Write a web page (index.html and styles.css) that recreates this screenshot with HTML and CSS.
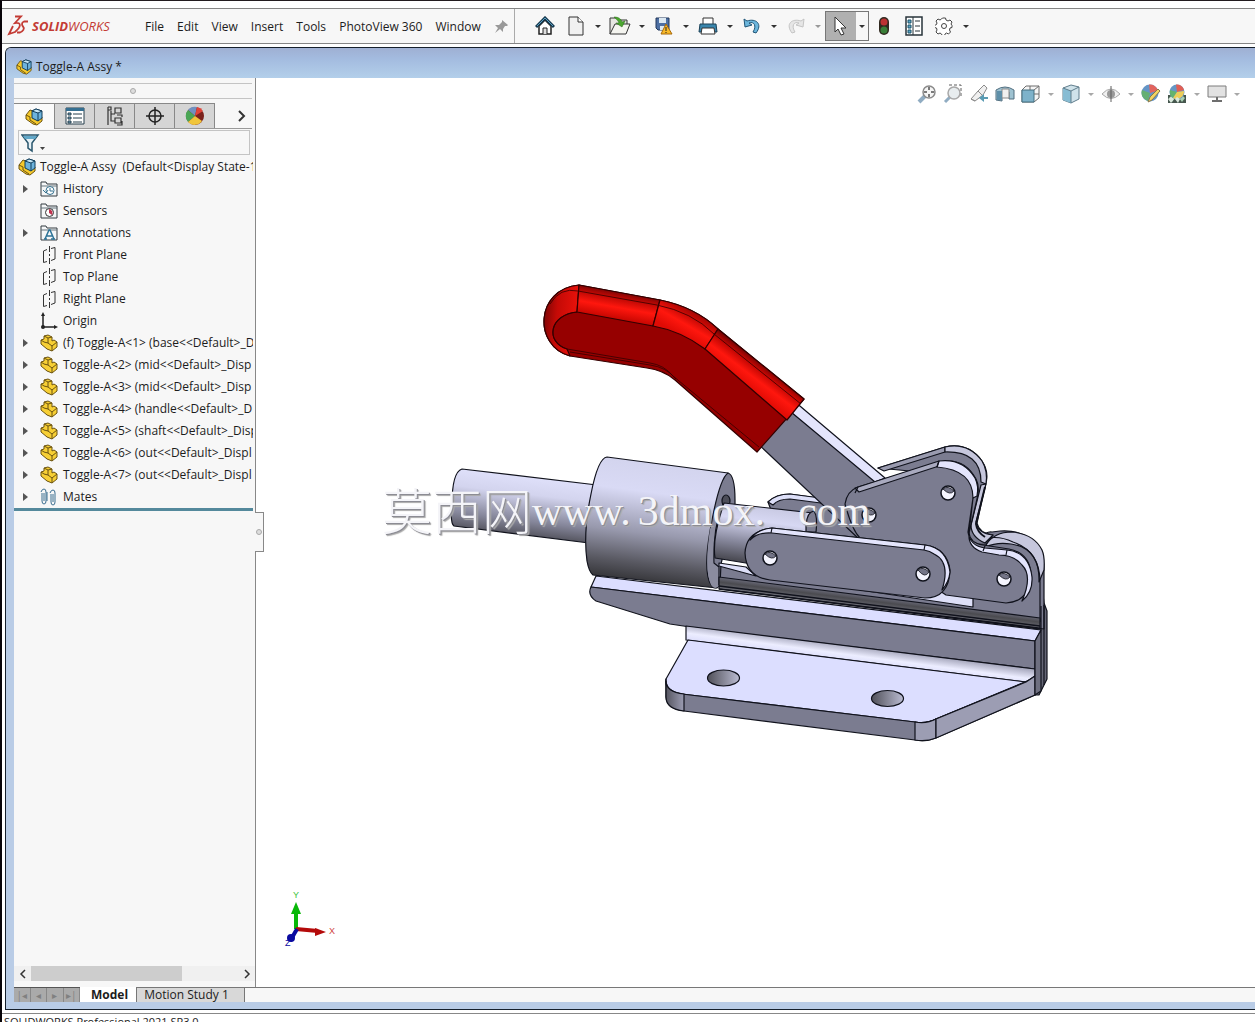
FILE: index.html
```html
<!DOCTYPE html>
<html lang="en">
<head>
<meta charset="utf-8">
<title>Toggle-A Assy - SOLIDWORKS</title>
<link rel="stylesheet" href="styles.css">
</head>
<body>
<svg class="defs" aria-hidden="true">
  <symbol id="asm" viewBox="0 0 18 18">
    <path d="M1 7l4-5 3 1v6l4 3 5-3v4l-5 4-4-1-7-5z" fill="#f6c92b" stroke="#6b5310" stroke-linejoin="round"/>
    <path d="M1 7l4 2v3l6 4" fill="none" stroke="#6b5310"/>
    <path d="M7 3l4-2 6 2v7l-4 3-6-3z" fill="#6db3dc" stroke="#123f5c" stroke-linejoin="round"/>
    <path d="M7 3l6 2 4-2-6-2z" fill="#c7e6f5"/><path d="M7 3l6 2 4-2M13 5v8M7 3l4-2 6 2" fill="none" stroke="#123f5c"/>
  </symbol>
  <symbol id="part" viewBox="0 0 18 18">
    <path d="M1 6l3-1V2l4-1 4 2v4l2-1 3 2v5l-5 4-5-2-6-5z" fill="#f7cf34" stroke="#6b5310" stroke-linejoin="round"/>
    <path d="M4 2l4 2v5l4 3 5-4M1 6l3 2 4 1M12 12v5M8 4l4-1" fill="none" stroke="#6b5310"/>
  </symbol>
  <symbol id="plane" viewBox="0 0 18 18"><path d="M7 3.500L3.500 5v11.500L7 15.500M11 2.500l4-1V13l-4 1.500" fill="none" stroke="#333"/><path d="M9.500 0v18" stroke="#333" stroke-dasharray="6 2 2 2"/></symbol>
  <symbol id="folder" viewBox="0 0 18 18"><path d="M1 16V2h5l1 2h10v12z" fill="#f4f6f7" stroke="#333b40"/><path d="M1 6h16" stroke="#66757d"/></symbol>
</svg>

<div class="app">
  <header class="menubar">
    <div class="brand">
      <svg width="22" height="22" viewBox="0 0 22 22"><path d="M8 1.500h6L8 8c7-1 6 4 0 9l-6 2 4-8M21 6.500h-4c-3 1-2 4-1 5 2 2 0 5-3 6h-3" fill="none" stroke="#c33b34" stroke-width="1.800"/></svg>
      <span><b>SOLID</b>WORKS</span>
    </div>
    <nav class="menus">
      <button>File</button><button>Edit</button><button>View</button><button>Insert</button><button>Tools</button><button>PhotoView 360</button><button>Window</button>
      <button aria-label="Pin menu"><svg width="14" height="14" viewBox="0 0 14 14"><path d="M8 0l6 5-1 1-2 0-2 3v3l-3-3-5 4 3-5-3-3 4 0 3-3z" fill="#999"/></svg></button>
    </nav>
    <div class="tools">
      <button aria-label="Home"><svg width="20" height="20" viewBox="0 0 20 20"><path d="M4 10v8h12v-8l-6-6z" fill="#fff" stroke="#222" stroke-width="1.500"/><path d="M8 18v-6h4v6" fill="#ddd" stroke="#222"/><path d="M1 11l9-9 9 9" fill="none" stroke="#163a50" stroke-width="3"/><path d="M2 10l8-8 8 8" fill="none" stroke="#5b9fc2"/></svg></button>
      <button class="new" aria-label="New"><svg width="20" height="20" viewBox="0 0 20 20"><path d="M3 1h9l5 5v13H3z" fill="#f1f1f1" stroke="#333"/><path d="M12 1v5h5" fill="#fff" stroke="#333"/></svg></button><button class="caret" aria-label="New options"></button>
      <button aria-label="Open"><svg width="22" height="20" viewBox="0 0 22 20"><path d="M1 18V2h6l2 2h9v4" fill="#e6e6e1" stroke="#333"/><path d="M1 18l5-10h15l-4 10z" fill="#f4f4ef" stroke="#333"/><path d="M5 1c5 0 7 2 8 5l3-1-3 6-6-4 3 0c-1-3-3-4-5-6z" fill="#4ba82e" stroke="#256715" stroke-width=".5"/></svg></button><button class="caret" aria-label="Open options"></button>
      <button aria-label="Save"><svg width="18" height="20" viewBox="0 0 18 20"><path d="M1 2h13v12H3l-2-2z" fill="#4d6fa3" stroke="#22395c"/><path d="M4 2h7v5H4zM5 10h6v4H5z" fill="#dce8f2"/><path d="M11 8l6 10H6z" fill="#f8b928" stroke="#a86908"/><path d="M11 11v4M11 16v1" stroke="#222"/></svg></button><button class="caret" aria-label="Save options"></button>
      <button aria-label="Print"><svg width="20" height="20" viewBox="0 0 20 20"><path d="M5 8V2h10v6" fill="#fff" stroke="#333"/><path d="M2 8h16l1 8H1z" fill="#3a86ad" stroke="#1c4258"/><path d="M4 12h12l1 6H3z" fill="#fff" stroke="#333"/></svg></button><button class="caret" aria-label="Print options"></button>
      <button aria-label="Undo"><svg width="18" height="18" viewBox="0 0 18 18"><path d="M1 2l1 8 7-2-3-2c5-2 8 3 4 9l3 1c7-9 0-15-9-12z" fill="#6cb6dc" stroke="#1f5577"/></svg></button><button class="caret" aria-label="Undo options"></button>
      <button aria-label="Redo" disabled><svg width="18" height="18" viewBox="0 0 18 18"><path d="M17 2l-1 8-7-2 3-2c-5-2-8 3-4 9l-3 1c-7-9 0-15 9-12z" fill="#e6e6e6" stroke="#c4c4c4"/></svg></button><button class="caret pale" aria-label="Redo options"></button>
      <span class="select"><button class="pressed" aria-label="Select"><svg width="16" height="20" viewBox="0 0 16 20"><path d="M2 1v15l3-3 3 6 3-1-3-6h5z" fill="#fff" stroke="#333"/></svg></button><button class="caret" aria-label="Select options"></button></span>
      <button aria-label="Rebuild"><svg width="12" height="20" viewBox="0 0 12 20"><rect x="1" y="1" width="10" height="18" rx="5" fill="#30291f"/><circle cx="6" cy="6" r="3.500" fill="#bb3232"/><circle cx="6" cy="14" r="3.500" fill="#397f38"/></svg></button>
      <button aria-label="File properties"><svg width="18" height="20" viewBox="0 0 18 20"><path d="M1 1h16v18H1z" fill="#fff" stroke="#28343b" stroke-width="1.500"/><path d="M3 4h3v3H3zM3 9h3v3H3zM3 14h3v3H3z" fill="#59a6c9" stroke="#1d5269"/><path d="M8 1v18M10 5h5M10 10h5M10 15h5" stroke="#28343b"/></svg></button>
      <button aria-label="Options"><svg width="18" height="18" viewBox="0 0 18 18"><path d="M7.500 1h3l.5 2 2 1 2-1 2 2-1 2 1 1.500v2l-2 .5-.5 2 1 2-2 2-2-1-1.500 1-.5 2h-2l-1-2-1.500-1-2 1-2-2 1-2-.5-2-2-.5v-2l2-1 .5-1.500-1-2 2-2 2 1 1.500-1z" fill="#fff" stroke="#444"/><circle cx="9" cy="9" r="2.500" fill="none" stroke="#444"/></svg></button><button class="caret" aria-label="Options menu"></button>
    </div>
  </header>

  <main class="document">
    <h1 class="titlebar"><svg width="16" height="16"><use href="#asm"/></svg>Toggle-A Assy *</h1>
    <div class="workspace">
      <aside class="panel">
        <div class="grip"><i></i></div>
        <div class="paneltabs">
          <button class="active" aria-label="Feature tree"><svg width="18" height="18"><use href="#asm"/></svg></button>
          <button aria-label="Properties"><svg width="20" height="20" viewBox="0 0 20 20"><path d="M1 2h18v16H1z" fill="#fff" stroke="#263e4c"/><path d="M1 2h18v3H1z" fill="#356f91"/><path d="M3 7h3v2H3zM3 11h3v2H3zM3 15h3v2H3z" fill="#73a9c5" stroke="#263e4c"/><path d="M8 8h9M8 12h9M8 16h9" stroke="#263e4c"/></svg></button>
          <button aria-label="Configurations"><svg width="20" height="20" viewBox="0 0 20 20"><path d="M3 1v18M3 1h3v3H3M6 5v10h4M6 8h4M10 2h6v5h-6zM10 12h6v5h-6zM12 9h5v2M12 19h5v-4" fill="none" stroke="#333" stroke-width="1.200"/></svg></button>
          <button aria-label="Dimensions"><svg width="20" height="20" viewBox="0 0 20 20"><circle cx="10" cy="10" r="6" fill="none" stroke="#222" stroke-width="1.500"/><path d="M10 1v18M1 10h18" stroke="#222" stroke-width="1.500"/></svg></button>
          <button aria-label="Appearances"><svg width="20" height="20" viewBox="0 0 20 20"><circle cx="10" cy="10" r="9" fill="#7b221d"/><path d="M10 10L3 4a9 9 0 0 1 9-3z" fill="#7190c0"/><path d="M10 10L3 4a9 9 0 0 0 0 12z" fill="#4aa655"/><path d="M10 10L3 16a9 9 0 0 0 14-1z" fill="#f0c53b"/><path d="M10 10l2-9a9 9 0 0 1 6 4z" fill="#e04339"/></svg></button>
          <button class="more" aria-label="More tabs"><svg width="8" height="12" viewBox="0 0 8 12"><path d="M1 1l5 5-5 5" fill="none" stroke="#333" stroke-width="2"/></svg></button>
        </div>
        <button class="filter" aria-label="Filter tree"><svg width="26" height="20" viewBox="0 0 26 20"><path d="M1 2h16l-6 8v8l-4-3v-5z" fill="#e7f1f6" stroke="#29566d" stroke-width="1.500"/><path d="M2 3h14l-2 3H4z" fill="#62a8c9"/><path d="M19 14h5l-2.500 3z" fill="#444"/></svg></button>
        <ul class="tree">
          <li class="root"><svg width="18" height="18"><use href="#asm"/></svg>Toggle-A Assy&nbsp; (Default&lt;Display State-1</li>
          <li class="open"><svg width="18" height="18" viewBox="0 0 18 18"><use href="#folder"/><circle cx="10" cy="10.500" r="4" fill="#fff" stroke="#35718f"/><path d="M10 8v3h3M3 10l3 3 2-3" fill="none" stroke="#35718f"/></svg>History</li>
          <li><svg width="18" height="18" viewBox="0 0 18 18"><use href="#folder"/><circle cx="9.500" cy="10.500" r="4" fill="#fff" stroke="#333"/><path d="M9 11V7a4 4 0 0 1 3 6z" fill="#c0324e"/></svg>Sensors</li>
          <li class="open"><svg width="18" height="18" viewBox="0 0 18 18"><use href="#folder"/><path d="M5 15l4-9h1l4 9M7 12h5M4 15h3M11 15h4" fill="none" stroke="#2c7397" stroke-width="1.500"/></svg>Annotations</li>
          <li><svg width="18" height="18"><use href="#plane"/></svg>Front Plane</li>
          <li><svg width="18" height="18"><use href="#plane"/></svg>Top Plane</li>
          <li><svg width="18" height="18"><use href="#plane"/></svg>Right Plane</li>
          <li><svg width="18" height="18" viewBox="0 0 18 18"><path d="M3 3v12h12" fill="none" stroke="#222" stroke-width="1.500"/><path d="M3 0l2 4H1zM18 15l-4 2v-4z" fill="#222"/><circle cx="3" cy="15" r="2" fill="#222"/></svg>Origin</li>
          <li class="open"><svg width="18" height="18"><use href="#part"/></svg>(f) Toggle-A&lt;1&gt; (base&lt;&lt;Default&gt;_D</li>
          <li class="open"><svg width="18" height="18"><use href="#part"/></svg>Toggle-A&lt;2&gt; (mid&lt;&lt;Default&gt;_Disp</li>
          <li class="open"><svg width="18" height="18"><use href="#part"/></svg>Toggle-A&lt;3&gt; (mid&lt;&lt;Default&gt;_Disp</li>
          <li class="open"><svg width="18" height="18"><use href="#part"/></svg>Toggle-A&lt;4&gt; (handle&lt;&lt;Default&gt;_D</li>
          <li class="open"><svg width="18" height="18"><use href="#part"/></svg>Toggle-A&lt;5&gt; (shaft&lt;&lt;Default&gt;_Disp</li>
          <li class="open"><svg width="18" height="18"><use href="#part"/></svg>Toggle-A&lt;6&gt; (out&lt;&lt;Default&gt;_Displ</li>
          <li class="open"><svg width="18" height="18"><use href="#part"/></svg>Toggle-A&lt;7&gt; (out&lt;&lt;Default&gt;_Displ</li>
          <li class="open"><svg width="18" height="18" viewBox="0 0 18 18"><path d="M2 5v8q0 3 2 3t2-3V4Q6 1 4 1T1 4M4 5v8M11 6v8q0 3 2 3t2-3V5q0-3-2-3t-3 3M13 6v8M7 4v9" fill="none" stroke="#3b6e90"/></svg>Mates</li>
        </ul>
        <div class="scroll">
          <button aria-label="Scroll left"><svg width="8" height="10" viewBox="0 0 8 10"><path d="M6 1L2 5l4 4" fill="none" stroke="#333" stroke-width="1.500"/></svg></button>
          <div class="track"><i></i></div>
          <button aria-label="Scroll right"><svg width="8" height="10" viewBox="0 0 8 10"><path d="M2 1l4 4-4 4" fill="none" stroke="#333" stroke-width="1.500"/></svg></button>
        </div>
        <button class="splitter" aria-label="Collapse panel"><i></i></button>
      </aside>

      <section class="view">
        <svg class="model" viewBox="256 78 999 909" preserveAspectRatio="xMinYMin meet" role="img" aria-label="Toggle clamp assembly">
          <defs>
            <linearGradient id="shaft" gradientUnits="userSpaceOnUse" x1="525" y1="476" x2="518" y2="535"><stop offset="0" stop-color="#dfe0fa"/><stop offset=".3" stop-color="#d3d4ee"/><stop offset=".75" stop-color="#85869a"/><stop offset="1" stop-color="#55555f"/></linearGradient>
            <linearGradient id="barrel" gradientUnits="userSpaceOnUse" x1="665" y1="464" x2="650" y2="582"><stop offset="0" stop-color="#d3d4ee"/><stop offset=".25" stop-color="#d9daf5"/><stop offset=".6" stop-color="#9899ad"/><stop offset=".85" stop-color="#595962"/><stop offset="1" stop-color="#37373b"/></linearGradient>
            <linearGradient id="rod" gradientUnits="userSpaceOnUse" x1="760" y1="503" x2="752" y2="562"><stop offset="0" stop-color="#c5c6df"/><stop offset=".3" stop-color="#d7d8f3"/><stop offset=".7" stop-color="#85869a"/><stop offset="1" stop-color="#4c4c55"/></linearGradient>
            <linearGradient id="groove" gradientUnits="userSpaceOnUse" x1="880" y1="594" x2="878" y2="610"><stop offset="0" stop-color="#7b7c90"/><stop offset=".5" stop-color="#4b4b50"/><stop offset="1" stop-color="#747580"/></linearGradient>
            <linearGradient id="fillet" gradientUnits="userSpaceOnUse" x1="860" y1="647" x2="858" y2="662"><stop offset="0" stop-color="#a9aabf"/><stop offset=".6" stop-color="#ecedff"/><stop offset="1" stop-color="#dfe0fc"/></linearGradient>
            <linearGradient id="hole"><stop offset="0" stop-color="#505059"/><stop offset="1" stop-color="#bbbcd2"/></linearGradient>
            <linearGradient id="edge"><stop offset="0" stop-color="#555560"/><stop offset="1" stop-color="#9c9db3"/></linearGradient>
            <linearGradient id="red0" gradientUnits="userSpaceOnUse" x1="543" y1="315" x2="577" y2="318"><stop offset="0" stop-color="#7b0505"/><stop offset=".4" stop-color="#c50a06"/><stop offset="1" stop-color="#e9120b"/></linearGradient>
            <linearGradient id="red1" gradientUnits="userSpaceOnUse" x1="620" y1="292" x2="615" y2="320"><stop offset="0" stop-color="#7b0505"/><stop offset=".2" stop-color="#bb0804"/><stop offset=".55" stop-color="#ff170e"/><stop offset="1" stop-color="#c20500"/></linearGradient>
            <linearGradient id="red2" gradientUnits="userSpaceOnUse" x1="695" y1="309" x2="680" y2="335"><stop offset="0" stop-color="#8c0505"/><stop offset=".25" stop-color="#bf0804"/><stop offset=".6" stop-color="#ff170e"/><stop offset="1" stop-color="#e00b05"/></linearGradient>
            <linearGradient id="red3" gradientUnits="userSpaceOnUse" x1="761" y1="363" x2="745" y2="384"><stop offset="0" stop-color="#760303"/><stop offset=".25" stop-color="#c50703"/><stop offset=".6" stop-color="#ff170e"/><stop offset="1" stop-color="#e50d06"/></linearGradient>
          </defs>
          <g stroke="#10121c" stroke-width="1.200" stroke-linejoin="round">
            <!-- rear bracket -->
            <path d="M1040 570l4 33 3 8v68l-8 16-5 0V570z" fill="#656676"/>
            <path d="M719 564l60 14 200-40q8-7 13-6l8-1q28-2 40 20 4 8 4 18v60L719 586z" fill="#7b7c90"/>
            <path d="M986 545q8-13 26-13 22 2 30 18 3 7 2 20l-5 12q1-34-28-38-15-2-25 3z" fill="#c6c7dd"/>
            <path d="M978 542q16-9 35 0 27 9 27 40v40" fill="none"/>
            <path d="M878 468l67-21q23-5 37 14 8 12 3 25l-8 37q2 10 16 12l-7 9-20 1-8-20-6-50z" fill="#7b7c90"/>
            <path d="M878 468l67-21v5l-61 19z" fill="#9a9baf"/>
            <path d="M945 447q23-5 37 14 6 10 4 23l-5-2q0-31-36-30z" fill="#c6c7dd"/>
            <path d="M986 484l-10 38q2 12 17 13l-8 8q-14-6-14-18l10-40z" fill="#c6c7dd"/>
            <path d="M985 487l-9 37q1 8 9 13" fill="none" stroke-width="2"/>
            <!-- handle bar -->
            <path d="M768 502q8-8 22-8l56 8 50 68-110-20z" fill="#7b7c90"/>
            <path d="M768 502q8-8 22-8l46 6v5l-46-6q-12 0-17 6z" fill="#dddff8"/>
            <path d="M789 410l92 75-10 62-12-8-104-98z" fill="#7b7c90"/>
            <path d="M794 401l91 77-10 4-84-70z" fill="#e3e4fc"/>
            <!-- threaded shaft and barrel -->
            <path d="M462 469q-10 3-10 36-2 18 2 21l135 17 8-58z" fill="url(#shaft)"/>
            <path d="M607 457q-9 1-16 37-8 38-4 67 2 11 6 14l124 13 11-115z" fill="url(#barrel)"/>
            <path d="M728 473q7 2 7 27v6l-14 58-1 21q-5 6-9 0-8-13-1-54 9-52 18-58z" fill="#7b7c90"/>
            <path d="M722 503q-8 24-7 60l5 4v18q-5 6-9 0-7-15-1-56z" fill="#8b8c9f" stroke="none"/>
            <path d="M724 502q-11 22-10 61l5 4v18" fill="none"/>
            <ellipse cx="726" cy="501" rx="4" ry="6" fill="#4c4d58"/>
            <path d="M724 503l89 10q6 13 0 29l-61 22-37-6q-3-20 9-55z" fill="url(#rod)"/>
            <path d="M806 525q1-13 8-14 4 6 2 21h-10z" fill="#7b7c90"/>
            <path d="M719 563l27 4 10 9-37-10z" fill="#dddff8"/>
            <!-- groove along the rail -->
            <path d="M719 577l321 41v10L719 589z" fill="url(#groove)"/>
            <path d="M719 586l321 40M719 589l321 40" fill="none" stroke-width="1.500"/>
            <path d="M860 590l70-2 43 8v11z" fill="#dddff8"/>
            <!-- front bracket plate -->
            <path d="M845 504q2-13 13-17l82-25q24-5 36 17 4 8 1 20l-8 34q1 10 14 12l26 4q20 4 22 24-1 29-25 30l-60-8-86-57q-8-8-15-34z" fill="#7b7c90"/>
            <path d="M855 488l84-27v5l-80 26z" fill="#a9aabf"/>
            <path d="M939 461q24-3 36 17 4 8 2 18l-4 2q0-28-36-31z" fill="#e3e4fc"/>
            <path d="M973 498l-5 34q2 14 17 16l22 2q22 2 25 27 1 15-10 24 11-25 0-36-8-10-23-10l-17-3q-14-5-13-18z" fill="#e3e4fc"/>
            <path d="M983 551l2-5M1006 555l1-5M937 467l2-6M855 493l3-6" fill="none"/>
            <!-- front link -->
            <path d="M745 553q1-22 27-25l153 17q22 3 25 25-1 28-25 28l-155-18q-24-3-25-27z" fill="#7b7c90"/>
            <path d="M750 540q7-11 22-12l153 17q22 3 25 27-1 10-8 18 9-28-8-36-4-3-10-4l-152-17q-14-1-22 7z" fill="#e3e4fc"/>
            <path d="M771 533l1-5M924 550l1-5" fill="none"/>
            <g fill="#f5f5ff" stroke-width="1.500"><circle cx="770" cy="558" r="7"/><circle cx="923" cy="574" r="7"/><circle cx="948" cy="493" r="7"/><circle cx="1004" cy="579" r="7"/><circle cx="869" cy="515" r="7"/></g>
            <path d="M765 554q5-4 11 2-4 5-11-2M918 570q5-4 11 2-4 7-11-2M943 489q5-4 11 2-4 5-11-2M999 575q5-4 11 2-4 5-11-2M864 511q5-4 11 2-4 5-11-2" fill="#747588" stroke-width=".8"/>
            <!-- base rail -->
            <path d="M596 576l445 54-6 11L591 587z" fill="#dcdeff"/>
            <path d="M591 587l444 54v28L690 627l-20-3-74-23q-9-6-5-14z" fill="#7b7c90"/>
            <path d="M686 626l349 43v7l-9 6-340-42z" fill="url(#fillet)"/>
            <path d="M688 640l338 42-90 37q-9 5-21 3l-233-28q-18-2-16-15z" fill="#dcdeff"/>
            <path d="M666 679q-1 12 16 15l233 28q12 2 21-3l96-40 3 0v16l-97 42q-10 5-23 3l-231-29q-17-2-18-14z" fill="#7b7c90"/>
            <path d="M666 681q0 11 18 13v17q-18-2-18-14z" fill="url(#edge)"/>
            <path d="M915 722q12 2 21-3v19q-10 4-21 2z" fill="#9c9db3"/>
            <path d="M936 719l90-37 9-6v19l-99 43z" fill="#9c9db3"/>
            <path d="M1035 641l6-11v61l-6 4zM1041 630v-24M1044 605v80" fill="#6e6f80"/>
            <ellipse cx="723.500" cy="678" rx="16" ry="8" fill="url(#hole)"/><ellipse cx="887.500" cy="698.500" rx="16" ry="8" fill="url(#hole)"/>
          </g>
          <!-- grip -->
          <g stroke="#330000" stroke-width="1.200" stroke-linejoin="round">
            <path d="M579 285l81 15q35 7 58 29l86 70-47 53-82-72q-12-10-28-12l-77-12c-37-10-35-67 9-71z" fill="#960000"/>
            <path d="M579 285l-2 27c-28 3-32 30-10 37l3 7c-37-10-35-67 9-71z" fill="url(#red0)"/>
            <path d="M579 285l81 15-7 26-76-14z" fill="url(#red1)"/>
            <path d="M660 300q35 7 58 29l-13 20q-24-18-52-23z" fill="url(#red2)"/>
            <path d="M718 329l86 70-17 21-82-71z" fill="url(#red3)"/>
            <path d="M550 304q10-17 28-13l79 14q35 7 57 29l87 70M577 312c-28 2-32 31-10 37l83 14q14 2 23 13l86 71M570 352l80 13q16 2 26 14" fill="none" stroke-width=".8"/>
          </g>
          <!-- coordinate triad -->
          <path d="M296 929v-20" stroke="#08b808" stroke-width="4"/><path d="M296 902l5 12h-10z" fill="#08b808"/>
          <path d="M296 929l22 2" stroke="#b40a0a" stroke-width="4"/><path d="M326 932l-11 4v-8z" fill="#b40a0a"/>
          <path d="M297 929l-7 12" stroke="#0b0ba0" stroke-width="4"/><circle cx="291" cy="938" r="4" fill="#0b0ba0"/>
          <g class="axes"><text x="293" y="898" fill="#3cc43c">Y</text><text x="329" y="934" fill="#d04444">X</text><text x="285" y="946" fill="#0b0ba0">Z</text></g>
        </svg>
        <div class="watermark"><span class="cjk">莫西网</span><span>www.</span><span>3dmox.</span><span class="last">com</span></div>
        <div class="heads">
          <button aria-label="Zoom to fit"><svg width="20" height="20" viewBox="0 0 20 20"><path d="M2 18l6-6" stroke="#7d9eb8" stroke-width="4"/><circle cx="12" cy="8" r="6" fill="#f4f4f4" stroke="#777" stroke-width="1.500"/><path d="M12 3v3M12 10v3M7 8h3M14 8h3" stroke="#333" stroke-width="1.500"/></svg></button>
          <button aria-label="Zoom to area"><svg width="20" height="20" viewBox="0 0 20 20"><path d="M6 1h12v13" fill="none" stroke="#444" stroke-dasharray="3 2"/><path d="M2 18l6-6" stroke="#7d9eb8" stroke-width="3"/><circle cx="11" cy="9" r="6" fill="#e5eaed" stroke="#999" stroke-width="1.500"/></svg></button>
          <button aria-label="Previous view"><svg width="20" height="20" viewBox="0 0 20 20"><path d="M2 15l7-8 6-6 3 3-4 7-8 6z" fill="#eee" stroke="#777"/><path d="M9 7l4 4M2 15l4 2" stroke="#777"/><path d="M19 13h-4v-3l-5 4 5 4v-3h4z" fill="#3d8aa6"/></svg></button>
          <button aria-label="Section view"><svg width="20" height="20" viewBox="0 0 20 20"><path d="M1 6q9-6 18 0v9h-5V8H7v9l-6-1z" fill="#8eb8ca" stroke="#35576b"/><path d="M7 5h7v9H7z" fill="#eee" stroke="#777"/><path d="M2 7h5v9H2z" fill="#437c9b"/></svg></button>
          <button aria-label="View orientation"><svg width="20" height="20" viewBox="0 0 20 20"><path d="M1 6l4-4h13v12l-5 4H1z" fill="#f4f4f4" stroke="#555"/><path d="M1 6h12v12H1z" fill="#68a5c1" stroke="#25566c"/><path d="M13 6l5-4M13 10h5M9 2v4" stroke="#555"/></svg></button><button class="caret pale" aria-label="Orientation options"></button>
          <button aria-label="Display style"><svg width="20" height="20" viewBox="0 0 20 20"><path d="M2 4l8-3 8 2v12l-8 4-8-3z" fill="#c7dee7" stroke="#456779"/><path d="M2 4l8 3v12l-8-3z" fill="#73b1cc"/><path d="M2 4l8 3 8-4M10 7v12" fill="none" stroke="#456779"/></svg></button><button class="caret pale" aria-label="Style options"></button>
          <button aria-label="Hide or show items"><svg width="20" height="20" viewBox="0 0 20 20"><path d="M1 10q9-10 18 0-9 9-18 0z" fill="#eee" stroke="#999"/><circle cx="10" cy="10" r="4" fill="#888"/><path d="M10 2v16" stroke="#444"/></svg></button><button class="caret pale" aria-label="Visibility options"></button>
          <button aria-label="Edit appearance"><svg width="20" height="20" viewBox="0 0 20 20"><circle cx="9" cy="9" r="8.500" fill="#4a83bd"/><path d="M9 9L8 .5a8.500 8.500 0 0 1 9 6z" fill="#dd4a43"/><path d="M9 9l-8-3a8.500 8.500 0 0 0 6 11z" fill="#49a25c"/><path d="M7 18l2-5 8-8 2 2-8 9z" fill="#f2cd47" stroke="#75632e"/></svg></button>
          <button aria-label="Apply scene"><svg width="20" height="20" viewBox="0 0 20 20"><path d="M1 11h18v8H1z" fill="#263a30"/><path d="M2 14l3-3 3 3-3 4zM12 14l3-3 3 3-3 4z" fill="#9ac8a4"/><circle cx="10" cy="8" r="7.500" fill="#4b86bc"/><path d="M10 8L9 .5A7.500 7.500 0 0 1 17 6z" fill="#dc4438"/><path d="M10 8l-7-2a7.500 7.500 0 0 0 3 8z" fill="#4ba657"/><path d="M10 8l7-1a7.500 7.500 0 0 1-11 7z" fill="#ecc63d"/><path d="M1 15l3-2 3 2-3 4zM8 15l2-2 3 2-2 4z" fill="#d5e6d8"/></svg></button><button class="caret pale" aria-label="Scene options"></button>
          <button aria-label="View settings"><svg width="20" height="20" viewBox="0 0 20 20"><path d="M1 2h18v11H1z" fill="#ddd" stroke="#666"/><path d="M10 13v4M5 17h10" stroke="#555" stroke-width="2"/></svg></button><button class="caret pale" aria-label="Settings options"></button>
        </div>
      </section>
    </div>
    <footer class="sheets">
      <div class="nav"><button aria-label="First">|◂</button><button aria-label="Previous">◂</button><button aria-label="Next">▸</button><button aria-label="Last">▸|</button></div>
      <button class="current">Model</button><button class="sheet">Motion Study 1</button><div class="rest"></div>
    </footer>
  </main>
  <div class="status">SOLIDWORKS Professional 2021 SP3.0</div>
</div>
</body>
</html>
```

FILE: styles.css
```css
* { box-sizing: border-box; }
body { margin: 0; font: 12px/16px "Open Sans", "Noto Sans", sans-serif; color: #1c1c1c; background: #fff; }
button { margin: 0; padding: 0; border: 0; background: none; font: inherit; color: inherit; display: flex; align-items: center; justify-content: center; }
svg { display: block; flex: none; }
.defs { position: absolute; width: 0; height: 0; }
.app { display: flex; flex-direction: column; height: 100vh; overflow: hidden; border-left: 2px solid #080409; border-top: 1px solid #221b1f; padding-top: 7px; }

.menubar { display: flex; flex: none; height: 36px; border-top: 1px solid #858585; border-bottom: 1px solid #858585; background: #f7f7f7; }
.brand { display: flex; align-items: center; gap: 3px; width: 143px; padding-left: 5px; font-size: 13px; font-style: italic; color: #c33b34; }
.menus { display: flex; align-items: center; justify-content: space-between; width: 370px; padding: 2px 6px 0 0; border-right: 1px solid #aaa; }
.tools { display: flex; align-items: center; padding-left: 15px; }
.tools button { width: 30px; height: 30px; }
.tools .new { margin-left: 1px; }
.tools .caret, .heads .caret { width: 14px; }
.caret::before { content: ""; border: 3px solid transparent; border-top-color: #333; border-bottom-width: 0; }
.caret.pale::before { border-top-color: #999; }
.select { display: flex; border: 1px solid #777; }
.tools .select button { height: 28px; }
.tools .select .caret { width: 12px; }
.tools .select .pressed { background: #b0b0b0; }

.document { display: flex; flex-direction: column; flex: 1; min-height: 0; margin: 3px 0 0 3px; border: solid #16202c; border-width: 1px 0 1px 1px; border-radius: 6px 0 0 0; background: #b9cce6; padding: 0 0 7px 8px; }
.titlebar { display: flex; align-items: center; gap: 4px; flex: none; height: 30px; margin: 0 0 0 -8px; padding: 7px 0 0 10px; border-radius: 5px 0 0 0; font-size: 12px; font-weight: 400; background: linear-gradient(#9fb0d3, #a3bbdf 35%, #b3cfea); }
.workspace { display: flex; flex: 1; min-height: 0; }
.panel { position: relative; display: flex; flex-direction: column; flex: none; width: 242px; background: #f7f7f7; border-right: 1px solid #888; }
.grip { display: flex; align-items: center; justify-content: center; height: 16px; margin: 5px 3px 4px 0; border: solid #c4c4c4; border-width: 1px 0; }
.grip i, .splitter i { width: 6px; height: 6px; border: 1px solid #aaa; border-radius: 3px; background: #ddd; }
.paneltabs { display: flex; height: 26px; margin-right: 3px; border-bottom: 1px solid #999; }
.paneltabs button { width: 40px; border: solid #888; border-width: 1px 1px 0 0; background: #d5d5d5; }
.paneltabs .active { width: 41px; height: 26px; background: #fafafa; }
.paneltabs .more { flex: 1; padding-left: 16px; border: 0; background: none; }
.filter { flex: none; height: 25px; justify-content: flex-start; margin: 1px 5px 1px 4px; padding-left: 2px; border: 1px solid #c4c4c4; }
.tree { flex: none; list-style: none; margin: 0 2px 0 0; padding: 0; border-bottom: 3px solid #54899c; overflow: hidden; }
.tree li { position: relative; display: flex; align-items: center; gap: 5px; height: 22px; padding-left: 26px; white-space: nowrap; }
.tree .root { padding-left: 4px; gap: 4px; }
.tree .open::before { content: ""; position: absolute; left: 9px; border: 4px solid transparent; border-left: 5px solid #555; border-right: 0; }
.scroll { display: flex; height: 15px; margin: auto 0 6px; background: #f0f0f0; }
.scroll button { width: 17px; }
.track { flex: 1; }
.track i { display: block; width: 73%; height: 100%; background: #cdcdcd; }
.splitter { position: absolute; left: 241px; top: 434px; z-index: 1; width: 9px; height: 40px; border: 1px solid #888; border-left: 0; background: #f7f7f7; }

.view { position: relative; flex: 1; min-width: 0; overflow: hidden; background: #fff; }
.model { width: 100%; height: 100%; }
.axes { font: 9px "Liberation Sans", sans-serif; }
.watermark { position: absolute; left: 126px; top: 405px; display: flex; gap: 7px; font: 42px/56px "Liberation Serif", serif; color: #f4f4f8; text-shadow: 1px 1px 0 #8c8c94, 2px 2px 1px #aaa; }
.watermark .cjk { margin-right: -7px; font: 300 50px/50px "Noto Sans CJK SC", sans-serif; }
.watermark .last { margin-left: 26px; }
.heads { position: absolute; right: 11px; top: 4px; display: flex; opacity: .85; }
.heads button { width: 26px; height: 24px; }

.sheets { display: flex; flex: none; height: 15px; background: #f7f7f7; line-height: 14px; }
.sheets button { height: 14px; }
.nav { display: flex; width: 66px; border-top: 1px solid #555; background: #aaa; color: #808080; font-size: 10px; }
.nav button { flex: 1; border-right: 1px solid #888; }
.sheets .current { width: 57px; height: 15px; padding-left: 3px; font-weight: 700; background: #fff; border-right: 1px solid #777; }
.sheets .sheet { width: 108px; height: 15px; padding-right: 8px; background: #d8d8d8; border: solid #777; border-width: 1px 1px 0 0; }
.rest { flex: 1; border-top: 1px solid #777; }
.status { flex: none; height: 9px; margin-top: 3px; padding-left: 2px; border-top: 1px solid #888; overflow: hidden; font-size: 11px; }
```
